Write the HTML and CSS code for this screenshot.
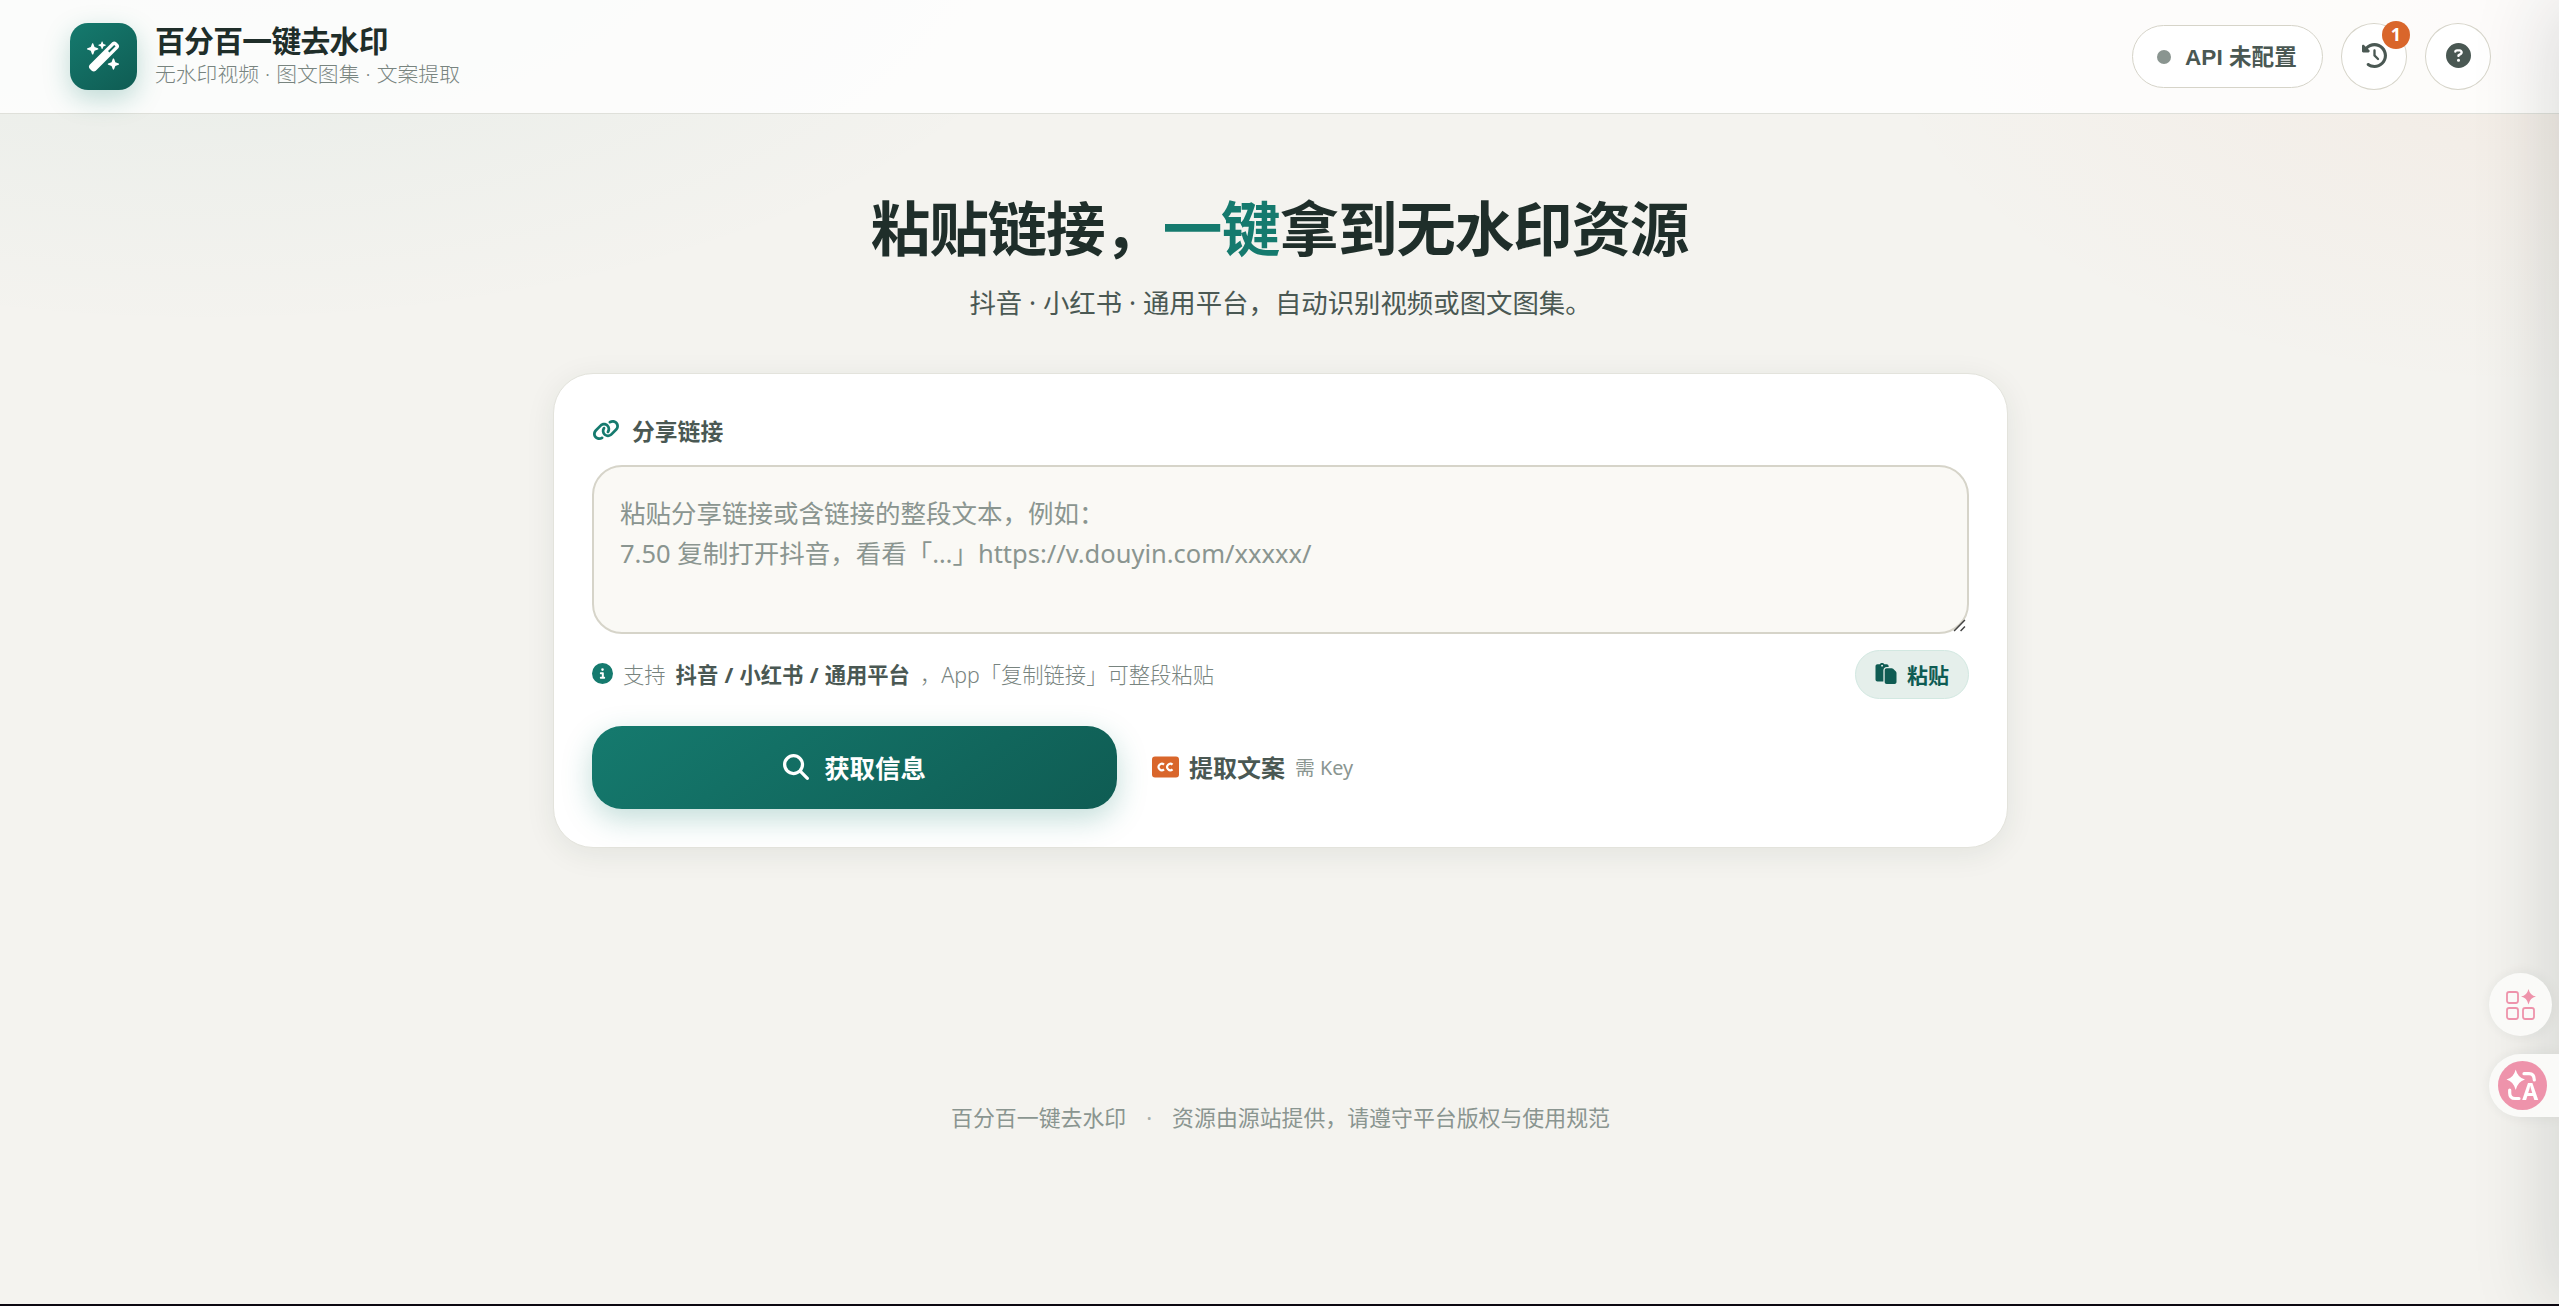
FILE: index.html
```html
<!DOCTYPE html>
<html lang="zh-CN">
<head>
<meta charset="UTF-8">
<meta name="viewport" content="width=device-width, initial-scale=1.0">
<title>百分百一键去水印</title>
<link rel="stylesheet" href="styles.css">
</head>
<body>

<header class="topbar">
  <div class="brand">
    <div class="brand-logo">
      <svg viewBox="0 0 576 512"><path d="M234.7 42.7L197 56.8c-3 1.1-5 4-5 7.2s2 6.1 5 7.2l37.7 14.1L248.8 123c1.1 3 4 5 7.2 5s6.1-2 7.2-5l14.1-37.7L315 71.2c3-1.1 5-4 5-7.2s-2-6.1-5-7.2L277.3 42.7 263.2 5c-1.1-3-4-5-7.2-5s-6.1 2-7.2 5L234.7 42.7zM46.1 395.4c-18.7 18.7-18.7 49.1 0 67.9l34.6 34.6c18.7 18.7 49.1 18.7 67.9 0L529.9 116.5c18.7-18.7 18.7-49.1 0-67.9L495.3 14.1c-18.7-18.7-49.1-18.7-67.9 0L46.1 395.4zM484.6 82.6l-105 105-23.3-23.3 105-105 23.3 23.3zM7.5 117.2C3 118.9 0 123.2 0 128s3 9.1 7.5 10.8L64 160l21.2 56.5c1.7 4.5 6 7.5 10.8 7.5s9.1-3 10.8-7.5L128 160l56.5-21.2c4.5-1.7 7.5-6 7.5-10.8s-3-9.1-7.5-10.8L128 96 106.8 39.5C105.1 35 100.8 32 96 32s-9.1 3-10.8 7.5L64 96 7.5 117.2zm352 256c-4.5 1.7-7.5 6-7.5 10.8s3 9.1 7.5 10.8L416 416l21.2 56.5c1.7 4.5 6 7.5 10.8 7.5s9.1-3 10.8-7.5L480 416l56.5-21.2c4.5-1.7 7.5-6 7.5-10.8s-3-9.1-7.5-10.8L480 352l-21.2-56.5c-1.7-4.5-6-7.5-10.8-7.5s-9.1 3-10.8 7.5L416 352l-56.5 21.2z"/></svg>
    </div>
    <div class="brand-text">
      <div class="brand-name">百分百一键去水印</div>
      <div class="brand-sub">无水印视频 · 图文图集 · 文案提取</div>
    </div>
  </div>
  <div class="top-actions">
    <button class="api-pill" type="button"><span class="dot"></span>API 未配置</button>
    <button class="icon-btn" type="button" title="历史记录">
      <svg viewBox="0 0 512 512"><path d="M75 75L41 41C25.9 25.9 0 36.6 0 57.9V168c0 13.3 10.7 24 24 24H134.1c21.4 0 32.1-25.9 17-41l-30.8-30.8C155 85.5 203 64 256 64c106 0 192 86 192 192s-86 192-192 192c-40.8 0-78.6-12.7-109.7-34.4c-14.5-10.1-34.4-6.6-44.6 7.9s-6.6 34.4 7.9 44.6C151.2 495 201.7 512 256 512c141.4 0 256-114.6 256-256S397.4 0 256 0C185.3 0 121.3 28.7 75 75zm181 53c-13.3 0-24 10.7-24 24V256c0 6.4 2.5 12.5 7 17l72 72c9.4 9.4 24.6 9.4 33.9 0s9.4-24.6 0-33.9l-65-65V152c0-13.3-10.7-24-24-24z"/></svg>
      <span class="badge">1</span>
    </button>
    <button class="icon-btn" type="button" title="帮助">
      <svg viewBox="0 0 512 512"><path d="M256 512A256 256 0 1 0 256 0a256 256 0 1 0 0 512zM169.8 165.3c7.9-22.3 29.1-37.3 52.8-37.3h58.3c34.9 0 63.1 28.3 63.1 63.1c0 22.6-12.1 43.5-31.7 54.8L280 264.4c-.2 13-10.9 23.6-24 23.6c-13.3 0-24-10.7-24-24V250.5c0-8.6 4.6-16.5 12.1-20.8l44.3-25.4c4.7-2.7 7.6-7.7 7.6-13.1c0-8.4-6.8-15.1-15.1-15.1H222.6c-3.4 0-6.4 2.1-7.5 5.3l-.4 1.2c-4.4 12.5-18.2 19-30.6 14.6s-19-18.2-14.6-30.6l.4-1.2zM224 352a32 32 0 1 1 64 0 32 32 0 1 1 -64 0z"/></svg>
    </button>
  </div>
</header>

<main class="main">
  <section class="hero">
    <h1>粘贴链接，<em>一键</em>拿到无水印资源</h1>
    <p>抖音 · 小红书 · 通用平台，自动识别视频或图文图集。</p>
  </section>

  <section class="card">
    <label class="field-label" for="linkInput">
      <svg viewBox="0 0 640 512"><path d="M579.8 267.7c56.5-56.5 56.5-148 0-204.5c-50-50-128.8-56.5-186.3-15.4l-1.6 1.1c-14.4 10.3-17.7 30.3-7.4 44.6s30.3 17.7 44.6 7.4l1.6-1.1c32.1-22.9 76-19.3 103.8 8.6c31.5 31.5 31.5 82.5 0 114L422.3 334.8c-31.5 31.5-82.5 31.5-114 0c-27.9-27.9-31.5-71.8-8.6-103.8l1.1-1.6c10.3-14.4 6.9-34.4-7.4-44.6s-34.4-6.9-44.6 7.4l-1.1 1.6C206.5 251.2 213 330 263 380c56.5 56.5 148 56.5 204.5 0L579.8 267.7zM60.2 244.3c-56.5 56.5-56.5 148 0 204.5c50 50 128.8 56.5 186.3 15.4l1.6-1.1c14.4-10.3 17.7-30.3 7.4-44.6s-30.3-17.7-44.6-7.4l-1.6 1.1c-32.1 22.9-76 19.3-103.8-8.6C74 372 74 321 105.5 289.5L217.7 177.2c31.5-31.5 82.5-31.5 114 0c27.9 27.9 31.5 71.8 8.6 103.9l-1.1 1.6c-10.3 14.4-6.9 34.4 7.4 44.6s34.4 6.9 44.6-7.4l1.1-1.6C433.5 260.8 427 182 377 132c-56.5-56.5-148-56.5-204.5 0L60.2 244.3z"/></svg>
      分享链接
    </label>
    <div class="input-wrap">
      <textarea id="linkInput" class="link-input" placeholder="粘贴分享链接或含链接的整段文本，例如：&#10;7.50 复制打开抖音，看看「…」https://v.douyin.com/xxxxx/"></textarea>
      <svg class="grip" viewBox="0 0 12 12"><path d="M1 11L11 1M7 11l4-4"/></svg>
    </div>

    <div class="hint-row">
      <div class="hint">
        <svg viewBox="0 0 512 512"><path d="M256 512A256 256 0 1 0 256 0a256 256 0 1 0 0 512zM216 336h24V272H216c-13.3 0-24-10.7-24-24s10.7-24 24-24h48c13.3 0 24 10.7 24 24v88h8c13.3 0 24 10.7 24 24s-10.7 24-24 24H216c-13.3 0-24-10.7-24-24s10.7-24 24-24zm40-208a32 32 0 1 1 0 64 32 32 0 1 1 0-64z"/></svg>
        <span>支持</span>
        <strong>抖音 / 小红书 / 通用平台</strong>
        <span>，App「复制链接」可整段粘贴</span>
      </div>
      <button class="paste-btn" type="button">
        <svg viewBox="0 0 512 512"><path d="M160 0c-23.7 0-44.4 12.9-55.4 32H48C21.5 32 0 53.5 0 80V400c0 26.5 21.5 48 48 48H192V176c0-44.2 35.8-80 80-80h48V80c0-26.5-21.5-48-48-48H215.4C204.4 12.9 183.7 0 160 0zM272 128c-26.5 0-48 21.5-48 48V448v16c0 26.5 21.5 48 48 48H464c26.5 0 48-21.5 48-48V243.9c0-12.7-5.1-24.9-14.1-33.9l-67.9-67.9c-9-9-21.2-14.1-33.9-14.1H320 272zM160 40a24 24 0 1 1 0 48 24 24 0 1 1 0-48z"/></svg>
        粘贴
      </button>
    </div>

    <div class="action-row">
      <button class="primary-btn" type="button">
        <svg viewBox="0 0 512 512"><path d="M416 208c0 45.9-14.9 88.3-40 122.7L502.6 457.4c12.5 12.5 12.5 32.8 0 45.3s-32.8 12.5-45.3 0L330.7 376c-34.4 25.2-76.8 40-122.7 40C93.1 416 0 322.9 0 208S93.1 0 208 0S416 93.1 416 208zM208 352a144 144 0 1 0 0-288 144 144 0 1 0 0 288z"/></svg>
        获取信息
      </button>
      <button class="ghost-btn" type="button">
        <svg viewBox="0 0 576 512"><rect y="32" width="576" height="448" rx="64"/><path class="cc" d="M256 206a68 68 0 1 0 0 100M438 206a68 68 0 1 0 0 100"/></svg>
        提取文案
        <small>需 Key</small>
      </button>
    </div>
  </section>
</main>

<footer class="footer">
  <span>百分百一键去水印</span>
  <span class="sep">·</span>
  <span>资源由源站提供，请遵守平台版权与使用规范</span>
</footer>

<aside class="drawer"></aside>

<div class="float-tools">
  <div class="float-grid">
    <svg viewBox="0 0 30 32">
      <rect x="1" y="3" width="11" height="11" rx="2.2"/>
      <rect x="1" y="19" width="11" height="11" rx="2.2"/>
      <rect x="17" y="19" width="11" height="11" rx="2.2"/>
      <path d="M22.5 0Q24 6.500 30 7.500Q24 8.700 22.500 15.500Q21 8.700 15 7.500Q21 6.500 22.500 0z"/>
    </svg>
  </div>
  <div class="float-translate">
    <svg viewBox="0 0 49 49">
      <circle cx="24.5" cy="24.5" r="24.5"/>
      <path class="star" d="M17.700 8.500Q19.800 16.800 27 18.500Q19.800 20.500 17.700 29Q15.600 20.500 8.500 18.500Q15.600 16.800 17.700 8.500z"/>
      <path class="line" d="M26 12.700h5q5.300 0 5.300 6.300M11.700 29v3q0 5.500 5.500 5.500h3.800"/>
      <text x="32.300" y="39">A</text>
    </svg>
  </div>
</div>
<div class="bottom-edge"></div>

</body>
</html>
```
FILE: styles.css
```css
:root {
  --bg: #f4f3ef;
  --ink: #1f2e2a;
  --ink-soft: #4a5853;
  --muted: #8a9590;
  --line: #d6d4c9;
  --teal: #157a6e;
  --teal-deep: #0f5c53;
  --orange: #d9662b;
}

* { box-sizing: border-box; }

html, body {
  margin: 0;
  height: 100%;
  overflow: hidden;
}
body {
  display: flex;
  flex-direction: column;
  background:
    radial-gradient(ellipse 1300px 620px at 8% -8%, rgba(21,122,110,0.07), transparent 70%),
    radial-gradient(ellipse 1000px 560px at 100% 0%, rgba(217,102,43,0.06), transparent 70%),
    var(--bg);
  color: var(--ink);
  font-family: "Noto Sans", "Noto Sans CJK SC", sans-serif;
}
button {
  font-family: inherit;
  cursor: pointer;
}
svg {
  display: block;
  flex-shrink: 0;
  fill: currentColor;
}

/* 顶部栏 */
.topbar {
  height: 114px;
  flex-shrink: 0;
  padding: 0 68px 0 70px;
  display: flex;
  align-items: center;
  justify-content: space-between;
  background: rgba(255,255,255,0.8);
  border-bottom: 1px solid #dfe0da;
}
.brand {
  display: flex;
  align-items: center;
  gap: 18px;
}
.brand-logo {
  width: 67px;
  height: 67px;
  border-radius: 18px;
  display: flex;
  align-items: center;
  justify-content: center;
  color: #fff;
  background: linear-gradient(145deg, var(--teal), var(--teal-deep));
  box-shadow: 0 9px 27px rgba(21,122,110,0.26);
}
.brand-logo svg { width: 34px; height: 31px; }
.brand-text { padding-bottom: 2px; }
.brand-name {
  font-size: 29.800px;
  line-height: 36px;
  font-weight: 700;
  letter-spacing: -0.700px;
}
.brand-sub {
  font-size: 20.800px;
  line-height: 30px;
  color: #78847f;
  font-weight: 300;
  word-spacing: 0.700px;
}
.top-actions {
  display: flex;
  align-items: center;
  gap: 18px;
}
.api-pill {
  height: 63px;
  width: 191px;
  padding: 0 0 2px 24px;
  display: flex;
  align-items: center;
  gap: 14px;
  border: 1px solid var(--line);
  border-radius: 40px;
  background: #fff;
  color: var(--ink-soft);
  font-family: "Liberation Sans", "Noto Sans CJK SC", sans-serif;
  font-size: 22.600px;
  font-weight: 700;
  white-space: nowrap;
}
.api-pill .dot {
  width: 14px;
  height: 14px;
  border-radius: 50%;
  background: var(--muted);
  position: relative;
  top: 1px;
}
.icon-btn {
  position: relative;
  width: 66px;
  height: 67px;
  padding: 0 0 3px;
  display: flex;
  align-items: center;
  justify-content: center;
  border: 1px solid var(--line);
  border-radius: 50%;
  background: #fff;
  color: var(--ink-soft);
}
.icon-btn svg { width: 25px; height: 25px; }
.badge {
  position: absolute;
  top: -3px;
  right: -4px;
  width: 28px;
  height: 28px;
  border-radius: 50%;
  background: var(--orange);
  color: #fff;
  font-size: 18px;
  line-height: 27px;
  font-weight: 700;
  text-align: center;
}

/* 标题 */
.main {
  width: 1457px;
  margin: 0 auto;
  padding-left: 2px;
}
.hero {
  padding-top: 72px;
  text-align: center;
}
.hero h1 {
  margin: 0;
  padding-right: 2px;
  font-size: 59.600px;
  line-height: 84px;
  font-weight: 700;
  letter-spacing: -1.200px;
}
.hero h1 em {
  font-style: normal;
  color: var(--teal);
}
.hero p {
  margin: 12px 0 0;
  font-size: 26.400px;
  line-height: 42px;
  color: var(--ink-soft);
}

/* 输入卡片 */
.card {
  margin-top: 49px;
  height: 475px;
  padding: 37px 38px;
  border: 1px solid #e3e3dc;
  border-radius: 40px;
  background: #fff;
  box-shadow: 0 6px 30px rgba(31,46,42,0.08);
}
.field-label {
  display: flex;
  align-items: center;
  gap: 12px;
  height: 38px;
  font-size: 22.800px;
  font-weight: 700;
  color: var(--ink-soft);
}
.field-label svg {
  width: 28px;
  height: 22px;
  color: var(--teal);
}
.input-wrap {
  position: relative;
  margin-top: 16px;
}
.link-input {
  display: block;
  width: 100%;
  height: 169px;
  padding: 26px;
  border: 2px solid var(--line);
  border-radius: 30px;
  background: #faf9f5;
  color: var(--ink);
  font-family: inherit;
  font-size: 25.500px;
  line-height: 40px;
  resize: none;
  outline: none;
}
.link-input::placeholder { color: var(--muted); }
.grip {
  position: absolute;
  right: 3px;
  bottom: 2px;
  width: 13px;
  height: 13px;
  fill: none;
  stroke: #444;
  stroke-width: 1.400;
}
.hint-row {
  margin-top: 16px;
  display: flex;
  align-items: center;
  justify-content: space-between;
}
.hint {
  display: flex;
  align-items: center;
  gap: 10px;
  padding-bottom: 2px;
  font-size: 21.300px;
  color: #78847f;
  font-weight: 300;
}
.hint svg {
  width: 21px;
  height: 21px;
  color: var(--teal);
}
.hint strong {
  color: var(--ink-soft);
  font-weight: 700;
  word-spacing: 0.700px;
}
.paste-btn {
  width: 114px;
  height: 49px;
  padding: 0 0 2px 19px;
  display: flex;
  align-items: center;
  gap: 10px;
  border: 1px solid #d2e8e1;
  border-radius: 25px;
  background: #e5efeb;
  color: var(--teal-deep);
  font-size: 21px;
  font-weight: 700;
}
.paste-btn svg { width: 22px; height: 21px; }
.action-row {
  margin-top: 27px;
  display: flex;
  align-items: center;
  gap: 35px;
}
.primary-btn {
  width: 525px;
  height: 83px;
  padding: 0 0 2px;
  display: flex;
  align-items: center;
  justify-content: center;
  gap: 15px;
  border: none;
  border-radius: 30px;
  background: linear-gradient(145deg, var(--teal), var(--teal-deep));
  box-shadow: 0 10px 30px rgba(21,122,110,0.26);
  color: #fff;
  font-size: 25.400px;
  font-weight: 700;
}
.primary-btn svg { width: 26px; height: 26px; }
.ghost-btn {
  padding: 0 0 2px;
  display: flex;
  align-items: center;
  gap: 10px;
  border: none;
  background: none;
  color: var(--ink-soft);
  font-size: 24px;
  font-weight: 700;
}
.ghost-btn svg {
  width: 27px;
  height: 24px;
  color: var(--orange);
}
.ghost-btn .cc {
  fill: none;
  stroke: #fff;
  stroke-width: 46;
}
.ghost-btn small {
  font-size: 19.800px;
  font-weight: 400;
  color: var(--muted);
}

/* 页脚 */
.footer {
  margin-top: 251px;
  padding-left: 2px;
  display: flex;
  justify-content: center;
  gap: 20px;
  font-size: 21.900px;
  line-height: 38px;
  color: var(--muted);
}
.footer .sep { opacity: 0.7; }

/* 收起在屏幕右侧的抽屉，只露出阴影 */
.drawer {
  position: fixed;
  top: 0;
  bottom: 2px;
  left: 100%;
  width: 600px;
  box-shadow: -12px 0 72px rgba(31,46,42,0.14);
}

/* 悬浮工具 */
.float-tools {
  position: fixed;
  right: 0;
  top: 973px;
  width: 70px;
}
.float-grid {
  width: 63px;
  height: 63px;
  display: flex;
  align-items: center;
  justify-content: center;
  border-radius: 50%;
  background: #fafaf8;
  box-shadow: 0 0 14px rgba(31,46,42,0.07);
}
.float-grid svg {
  width: 30px;
  height: 32px;
  color: #ee93ab;
}
.float-grid rect {
  fill: none;
  stroke: currentColor;
  stroke-width: 1.800;
}
.float-translate {
  margin-top: 18px;
  height: 63px;
  padding: 7px 0 0 9px;
  border-radius: 32px 0 0 32px;
  background: #fafaf8;
  box-shadow: 0 0 14px rgba(31,46,42,0.07);
}
.float-translate svg {
  width: 49px;
  height: 49px;
  color: #ee93ab;
}
.float-translate .star { fill: #fff; }
.float-translate .line {
  fill: none;
  stroke: #fff;
  stroke-width: 3.200;
  stroke-linecap: round;
}
.float-translate text {
  fill: #fff;
  font-size: 23px;
  font-weight: 700;
  text-anchor: middle;
}
.bottom-edge {
  position: fixed;
  left: 0;
  right: 0;
  bottom: 0;
  height: 2px;
  background: #0b0710;
}
```
